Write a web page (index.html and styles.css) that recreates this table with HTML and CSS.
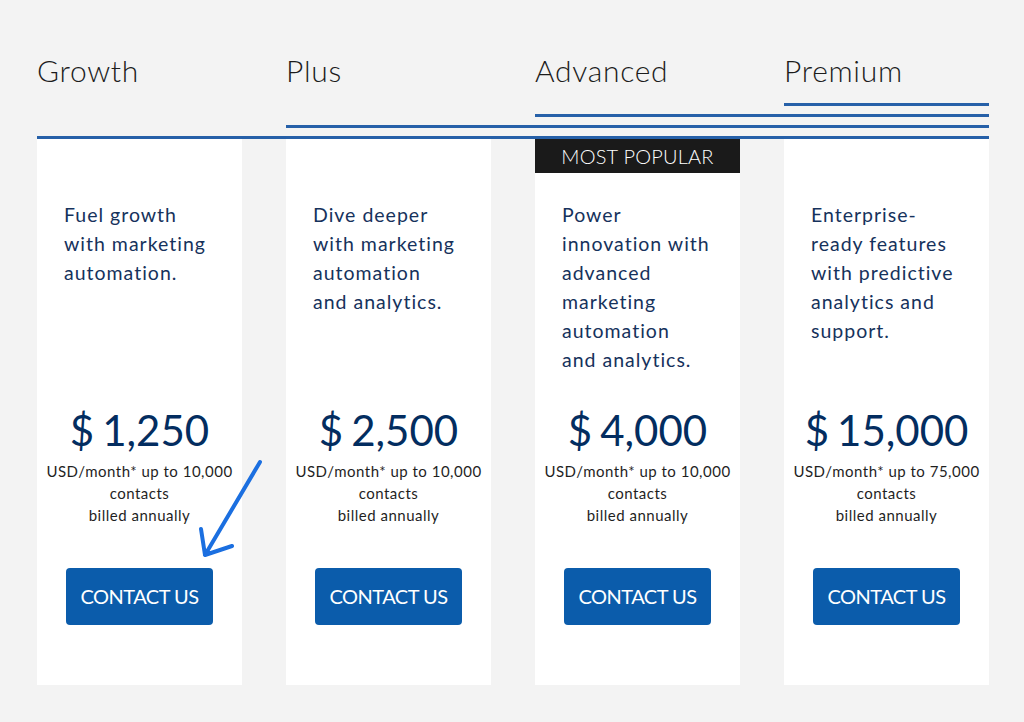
FILE: index.html
```html
<!DOCTYPE html>
<html lang="en">
<head>
<meta charset="utf-8">
<title>Pricing</title>
<link rel="stylesheet" href="styles.css">
</head>
<body>
<div class="page">
  <div class="header">
    <h2 class="title">Growth</h2>
    <h2 class="title">Plus</h2>
    <h2 class="title">Advanced</h2>
    <h2 class="title">Premium</h2>
    <div class="rule rule-4"></div>
    <div class="rule rule-3"></div>
    <div class="rule rule-2"></div>
    <div class="rule rule-1"></div>
  </div>
  <div class="cards">
    <div class="card">
      <p class="desc">Fuel growth<br>with marketing<br>automation.</p>
      <div class="price"><span class="cur">$</span>1,250</div>
      <p class="terms">USD/month* up to 10,000<br>contacts<br>billed annually</p>
      <a class="btn" href="#">CONTACT US</a>
    </div>
    <div class="card">
      <p class="desc">Dive deeper<br>with marketing<br>automation<br>and analytics.</p>
      <div class="price"><span class="cur">$</span>2,500</div>
      <p class="terms">USD/month* up to 10,000<br>contacts<br>billed annually</p>
      <a class="btn" href="#">CONTACT US</a>
    </div>
    <div class="card">
      <div class="badge">MOST POPULAR</div>
      <p class="desc">Power<br>innovation with<br>advanced<br>marketing<br>automation<br>and analytics.</p>
      <div class="price"><span class="cur">$</span>4,000</div>
      <p class="terms">USD/month* up to 10,000<br>contacts<br>billed annually</p>
      <a class="btn" href="#">CONTACT US</a>
    </div>
    <div class="card">
      <p class="desc">Enterprise-<br>ready features<br>with predictive<br>analytics and<br>support.</p>
      <div class="price"><span class="cur">$</span>15,000</div>
      <p class="terms">USD/month* up to 75,000<br>contacts<br>billed annually</p>
      <a class="btn" href="#">CONTACT US</a>
    </div>
  </div>
  <svg class="arrow" width="80" height="115" viewBox="195 450 80 115" aria-hidden="true">
    <path d="M260 462 L205 555 M201 529 L205 555 L232 546" fill="none" stroke="#1b6fe0" stroke-width="4" stroke-linecap="round" stroke-linejoin="round"/>
  </svg>
</div>
</body>
</html>
```

FILE: styles.css
```css
* { box-sizing: border-box; }
html, body { margin: 0; padding: 0; }
body {
  background: #f3f3f3;
  font-family: Lato, "Open Sans", "Liberation Sans", sans-serif;
  width: 1024px;
  height: 722px;
  overflow: hidden;
}
.page {
  position: relative;
  padding: 52px 35px 0 37px;
}
.header {
  display: grid;
  grid-template-columns: repeat(4, 205px);
  column-gap: 44px;
  row-gap: 8px;
}
.title {
  margin: 0 0 7px;
  font-size: 30px;
  line-height: 36px;
  font-weight: 300;
  color: #1c1c1c;
  letter-spacing: 0.7px;
}
.rule {
  height: 3px;
  background: #2660a8;
}
.rule-4 { grid-column: 4 / -1; }
.rule-3 { grid-column: 3 / -1; }
.rule-2 { grid-column: 2 / -1; }
.rule-1 { grid-column: 1 / -1; }

.cards {
  display: grid;
  grid-template-columns: repeat(4, 205px);
  column-gap: 44px;
}
.card {
  position: relative;
  background: #fff;
  height: 546px;
  padding-top: 61px;
  display: flex;
  flex-direction: column;
  align-items: center;
}
.badge {
  position: absolute;
  top: 0;
  left: 0;
  right: 0;
  height: 34px;
  background: #1a1a1a;
  color: #fff;
  font-size: 20px;
  font-weight: 300;
  letter-spacing: 0.2px;
  line-height: 34px;
  text-align: center;
}
.desc {
  align-self: stretch;
  margin: 0;
  padding-left: 27px;
  height: 205px;
  font-size: 19.5px;
  letter-spacing: 1px;
  line-height: 29px;
  color: #16325c;
  white-space: nowrap;
}
.price {
  font-size: 42px;
  line-height: 50px;
  color: #032d60;
  margin-bottom: 5px;
}
.cur { margin-right: 8px; }
.terms {
  margin: 0;
  font-size: 15px;
  letter-spacing: 0.5px;
  line-height: 22px;
  color: #1f1f1f;
  text-align: center;
  height: 66px;
}
.btn {
  margin-top: 42px;
  width: 147px;
  height: 57px;
  border-radius: 4px;
  background: #0b5cab;
  color: #fff;
  text-decoration: none;
  font-size: 20px;
  letter-spacing: -0.5px;
  line-height: 57px;
  text-align: center;
}
.arrow {
  position: absolute;
  left: 195px;
  top: 450px;
}
```
